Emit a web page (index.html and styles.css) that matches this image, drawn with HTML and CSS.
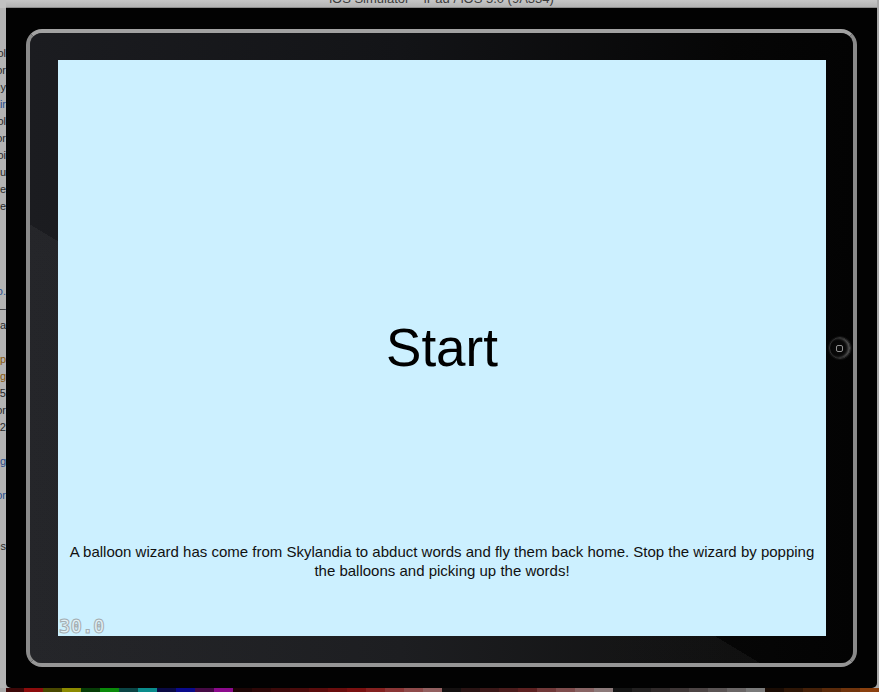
FILE: index.html
```html
<!DOCTYPE html>
<html>
<head>
<meta charset="utf-8">
<title>iOS Simulator</title>
<link rel="stylesheet" href="styles.css">
</head>
<body>
<div class="desk">
  <div class="side-left">
    <div class="frag">Tool</div>
    <div class="frag">Color</div>
    <div class="frag">Any</div>
    <div class="frag link">Pair</div>
    <div class="frag">Tool</div>
    <div class="frag">Color</div>
    <div class="frag">Toi</div>
    <div class="frag">You</div>
    <div class="frag">Are</div>
    <div class="frag">More</div>
    <div class="frag">&nbsp;</div>
    <div class="frag">&nbsp;</div>
    <div class="frag">&nbsp;</div>
    <div class="frag">&nbsp;</div>
    <div class="frag link">Info.</div>
    <div class="frag">—</div>
    <div class="frag">Loca</div>
    <div class="frag">&nbsp;</div>
    <div class="frag warn">Setup</div>
    <div class="frag warn">Debug</div>
    <div class="frag">2015</div>
    <div class="frag">Color</div>
    <div class="frag">2002</div>
    <div class="frag">&nbsp;</div>
    <div class="frag link">Debug</div>
    <div class="frag">&nbsp;</div>
    <div class="frag link">Color</div>
    <div class="frag">&nbsp;</div>
    <div class="frag">&nbsp;</div>
    <div class="frag">Files</div>
  </div>
  <div class="window">
    <div class="titlebar"><span class="title">iOS Simulator – iPad / iOS 5.0 (9A334)</span></div>
    <div class="win-body">
      <div class="device">
        <div class="bezel">
          <div class="screen">
            <div class="spacer"></div>
            <div class="start">Start</div>
            <div class="bottom">
              <p class="desc">A balloon wizard has come from Skylandia to abduct words and fly them back home. Stop the wizard by popping<br>the balloons and picking up the words!</p>
              <div class="fps">30.0</div>
            </div>
          </div>
          <div class="home-col"><div class="home"><div class="home-sq"></div></div></div>
        </div>
      </div>
    </div>
  </div>
  <div class="side-right"></div>
</div>
<div class="swatches">
  <div class="sw first" style="background:#3c0808"></div>
  <div class="sw" style="background:#8c0c0c"></div>
  <div class="sw" style="background:#4a4800"></div>
  <div class="sw" style="background:#8c8a00"></div>
  <div class="sw" style="background:#073d07"></div>
  <div class="sw" style="background:#0a8a0a"></div>
  <div class="sw" style="background:#0a4545"></div>
  <div class="sw" style="background:#0a8c8c"></div>
  <div class="sw" style="background:#0a0a45"></div>
  <div class="sw" style="background:#0a0a8c"></div>
  <div class="sw" style="background:#450a45"></div>
  <div class="sw" style="background:#8c0a8c"></div>
  <div class="sw" style="background:#1e0606"></div>
  <div class="sw" style="background:#2d0808"></div>
  <div class="sw" style="background:#3c0a0a"></div>
  <div class="sw" style="background:#4a0b0b"></div>
  <div class="sw" style="background:#5a0c0c"></div>
  <div class="sw" style="background:#6a0d0d"></div>
  <div class="sw" style="background:#7a1010"></div>
  <div class="sw" style="background:#84201f"></div>
  <div class="sw" style="background:#8a3535"></div>
  <div class="sw" style="background:#8e4a4a"></div>
  <div class="sw" style="background:#926060"></div>
  <div class="sw" style="background:#141010"></div>
  <div class="sw" style="background:#2a1414"></div>
  <div class="sw" style="background:#3a1818"></div>
  <div class="sw" style="background:#4a1c1c"></div>
  <div class="sw" style="background:#5c2020"></div>
  <div class="sw" style="background:#703838"></div>
  <div class="sw" style="background:#7e4c4c"></div>
  <div class="sw" style="background:#886464"></div>
  <div class="sw" style="background:#8c7a7a"></div>
  <div class="sw" style="background:#141414"></div>
  <div class="sw" style="background:#222020"></div>
  <div class="sw" style="background:#302a2a"></div>
  <div class="sw" style="background:#3e3636"></div>
  <div class="sw" style="background:#4c4444"></div>
  <div class="sw" style="background:#5a5454"></div>
  <div class="sw" style="background:#6a6666"></div>
  <div class="sw" style="background:#7a7a7a"></div>
  <div class="sw" style="background:#1a0c04"></div>
  <div class="sw" style="background:#2e1606"></div>
  <div class="sw" style="background:#442008"></div>
  <div class="sw" style="background:#5a2a0a"></div>
  <div class="sw" style="background:#70340c"></div>
  <div class="sw" style="background:#8a400e"></div>
</div>
</body>
</html>
```

FILE: styles.css
```css
html, body {
  margin: 0;
  padding: 0;
}

body {
  width: 879px;
  height: 692px;
  overflow: hidden;
  background: #a9a9a9;
  font-family: "Liberation Sans", Arial, Helvetica, sans-serif;
}

.desk {
  display: flex;
  height: 688px;
}

.side-left {
  width: 6px;
  flex: none;
  box-sizing: border-box;
  padding-top: 45px;
  background: #b4b4b4;
  overflow: hidden;
  display: flex;
  flex-direction: column;
  align-items: flex-end;
  box-shadow: inset 0 8px 0 #c2c2c2;
}

.frag {
  height: 17px;
  line-height: 17px;
  font-size: 11px;
  white-space: nowrap;
  color: #2a2a2a;
}

.frag.link {
  color: #2b4f8f;
}

.frag.warn {
  color: #8a5a10;
}

.window {
  width: 871px;
  flex: none;
  display: flex;
  flex-direction: column;
}

.titlebar {
  height: 8px;
  flex: none;
  overflow: hidden;
  text-align: center;
  background: linear-gradient(#c6c6c6, #b0b0b0);
  box-shadow: inset 0 -1px 0 #8c8c8c;
}

.title {
  display: block;
  font-size: 13px;
  line-height: 16px;
  margin-top: -9px;
  color: #3c3c3c;
}

.win-body {
  flex: 1;
  box-sizing: border-box;
  padding: 21px 20px;
  background: #020202;
  border-radius: 0 0 5px 5px;
}

.device {
  width: 831px;
  height: 638px;
  box-sizing: border-box;
  border: 4px solid #8a8a8a;
  border-top-color: #a2a2a2;
  border-bottom-color: #969696;
  border-radius: 16px;
  box-shadow: inset 0 0 0 1px #555;
}

.bezel {
  height: 100%;
  box-sizing: border-box;
  border-radius: 12px;
  display: flex;
  padding: 27px 0 27px 28px;
  background:
    linear-gradient(211deg, rgba(255, 255, 255, 0) 61%, rgba(255, 255, 255, 0.045) 61%),
    linear-gradient(90deg, #1b1c20 0%, #131417 45%, #060606 85%, #030303 100%);
}

.screen {
  width: 768px;
  height: 576px;
  flex: none;
  background: #ccf0ff;
  display: grid;
  grid-template-rows: 1fr 60px 1fr;
}

.start {
  font-size: 53px;
  line-height: 60px;
  text-align: center;
  color: #000;
}

.bottom {
  display: flex;
  flex-direction: column;
  justify-content: flex-end;
}

.desc {
  margin: 0 0 37px;
  font-size: 15px;
  line-height: 19px;
  text-align: center;
  white-space: nowrap;
  color: #111;
}

.fps {
  height: 19px;
  line-height: 19px;
  padding-left: 1px;
  font-family: "DejaVu Sans Mono", "Liberation Mono", monospace;
  font-size: 19px;
  font-weight: bold;
  color: #e2f0f5;
  -webkit-text-stroke: 1px #a4adb1;
}

.home-col {
  flex: 1;
  display: flex;
  align-items: center;
  justify-content: center;
}

.home {
  width: 22px;
  height: 22px;
  box-sizing: border-box;
  border-radius: 50%;
  border: 1px solid #333;
  background: radial-gradient(circle at 42% 50%, #0c0c0c 0%, #060606 55%, #3a3a3a 100%);
  box-shadow: inset -2px 0 3px rgba(170, 170, 170, 0.45), 0 0 0 1px #111;
  display: flex;
  align-items: center;
  justify-content: center;
}

.home-sq {
  width: 5px;
  height: 5px;
  border: 1px solid #929292;
  border-radius: 2px;
}

.side-right {
  flex: 1;
  background: #a9a9a9;
}

.swatches {
  display: flex;
  height: 4px;
  padding-left: 6px;
  background: #a9a9a9;
}

.sw {
  width: 19px;
  flex: none;
}

.sw.first {
  width: 18px;
}
```
